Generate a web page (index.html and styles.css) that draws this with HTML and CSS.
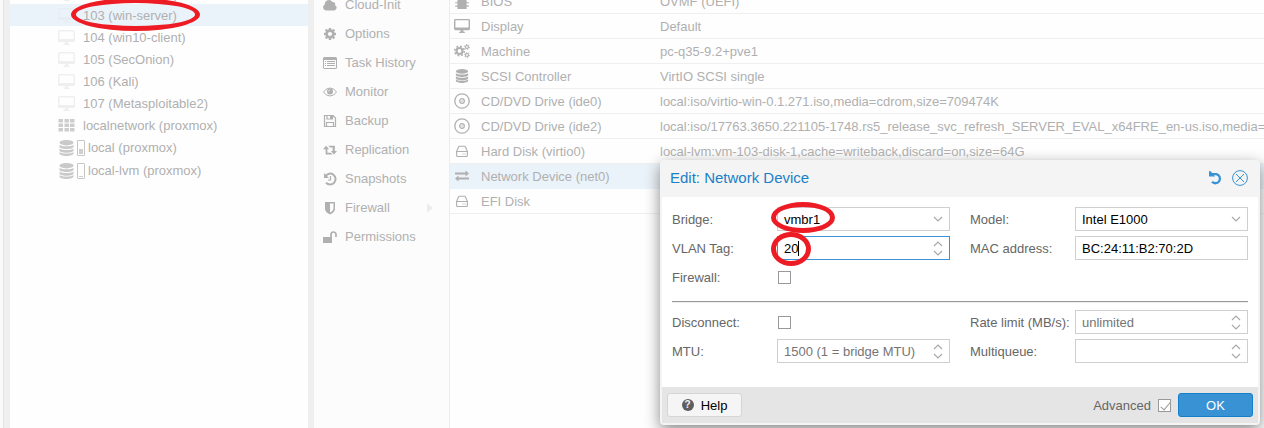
FILE: index.html
```html
<!DOCTYPE html>
<html lang="en">
<head>
<meta charset="utf-8">
<title>Edit: Network Device</title>
<link rel="stylesheet" href="styles.css">
</head>
<body>
<svg class="sprite" aria-hidden="true">
  <symbol id="desktop" viewBox="0 0 17 15"><path fill-rule="evenodd" d="M1.500 0h14Q17 0 17 1.500v9q0 1.500-1.500 1.500h-14Q0 12 0 10.500v-9Q0 0 1.500 0zM1.500 1.500v7.500h14V1.500zM7 12h3v1.500h1.500V15h-6v-1.500H7z"/></symbol>
  <symbol id="grid" viewBox="0 0 16 14"><path d="M0 1h4.500v3.500H0zM6 1h4.500v3.500H6zM11.500 1H16v3.500h-4.500zM0 5.500h4.500V9H0zM6 5.500h4.500V9H6zM11.500 5.500H16V9h-4.500zM0 10h4.500v3.500H0zM6 10h4.500v3.500H6zM11.500 10H16v3.500h-4.500z"/></symbol>
  <symbol id="database" viewBox="0 0 14 16"><ellipse cx="7" cy="2.700" rx="7" ry="2.700"/><path d="M0 4.800c2 2 12 2 14 0v2c0 3-14 3-14 0zM0 8.500c2 2 12 2 14 0v2c0 3-14 3-14 0zM0 12c2 2 12 2 14 0v1.500c0 3.300-14 3.300-14 0z"/></symbol>
  <symbol id="cloud" viewBox="0 0 14 14"><path d="M3 12.500A3.200 3.200 0 0 1 1.800 6.500 4.200 4.200 0 0 1 9.500 4a2.300 2.300 0 0 1 2.500 3.200 2.800 2.800 0 0 1-.6 5.300z"/></symbol>
  <symbol id="cog" viewBox="0 0 14 14"><circle cx="7" cy="7" r="3.400" fill="none" stroke="currentColor" stroke-width="2.600"/><path d="M5.800 1h2.400v2.500H5.800zM5.800 10.500h2.400V13H5.800zM1 5.800h2.500v2.400H1zM10.500 5.800H13v2.400h-2.500zM1.800 3.500l1.700-1.700 2 2-1.700 1.700zM8.500 3.800l2-2 1.700 1.700-2 2zM1.800 10.500l2-2 1.700 1.700-2 2zM8.500 10.200l1.700-1.700 2 2-1.700 1.700z"/></symbol>
  <symbol id="cogs" viewBox="0 0 16 16"><circle cx="5.500" cy="8" r="3" fill="none" stroke="currentColor" stroke-width="2.200"/><circle cx="5.500" cy="8" r="4.800" fill="none" stroke="currentColor" stroke-width="1.600" stroke-dasharray="1.885"/><g fill="none" stroke="currentColor"><circle cx="13" cy="4" r="1.500" stroke-width="1.200"/><circle cx="13" cy="4" r="2.500" stroke-dasharray="1.300"/><circle cx="13" cy="12" r="1.500" stroke-width="1.200"/><circle cx="13" cy="12" r="2.500" stroke-dasharray="1.300"/></g></symbol>
  <symbol id="list" viewBox="0 0 14 12"><path fill-rule="evenodd" d="M1 0h12l1 1v10l-1 1H1l-1-1V1zM1 3v8h12V3z"/><path d="M2 4h1v1H2zM4 4h8v1H4zM2 6h1v1H2zM4 6h8v1H4zM2 8h1v1H2zM4 8h8v1H4z"/></symbol>
  <symbol id="eye" viewBox="0 0 14 10"><path d="M.5 5Q3 1 7 1t6.500 4Q11 9 7 9T.5 5z" fill="none" stroke="currentColor"/><circle cx="7" cy="4.500" r="3"/><path d="M5.500 4.500Q5.500 3 7 3" fill="none" stroke="#fcfcfc" stroke-width=".7"/></symbol>
  <symbol id="save" viewBox="0 0 14 14"><path d="M1.500 1.500h8.500l2.500 2.500v8.500h-11zM4 1.500v3.500h5.500V1.500M3.500 12.500v-4h7v4" fill="none" stroke="currentColor" stroke-width="1.200"/><path d="M7 2h2v3H7z"/></symbol>
  <symbol id="repeat" viewBox="0 0 16 12"><path d="M3.500 1L7 5H5v4h4l2 2H3V5H0zM6 1h7.500v6H16l-3.500 4L9 7h2V3H8z"/></symbol>
  <symbol id="history" viewBox="0 0 14 14"><path d="M2.500 4A5.500 5.500 0 1 1 3 10.800" fill="none" stroke="currentColor" stroke-width="2"/><path d="M1 1v5h5z"/><path d="M7.500 4v4H5" fill="none" stroke="currentColor" stroke-width="1.200"/></symbol>
  <symbol id="shield" viewBox="0 0 12 14"><path fill-rule="evenodd" d="M1 1h10v7q0 3-5 5.500Q1 11 1 8zM6 2.500v9q3.500-1.800 3.500-4v-5z"/></symbol>
  <symbol id="unlock" viewBox="0 0 14 12"><path d="M0 6h9v6H0z"/><path d="M8 6V3.500a2.500 2.500 0 0 1 5 0V6" fill="none" stroke="currentColor" stroke-width="1.700"/></symbol>
  <symbol id="chip" viewBox="0 0 14 14"><path d="M3 0h8v14H3zM1 2h2v1H1zM1 5h2v1H1zM1 8h2v1H1zM1 11h2v1H1zM11 2h2v1h-2zM11 5h2v1h-2zM11 8h2v1h-2zM11 11h2v1h-2z"/></symbol>
  <symbol id="disc" viewBox="0 0 16 16"><g fill="none" stroke="currentColor" stroke-width="1.300"><circle cx="8" cy="8" r="7.200"/><circle cx="8" cy="8" r="2.300"/></g><circle cx="8" cy="8" r=".7"/></symbol>
  <symbol id="hdd" viewBox="0 0 12 12"><path d="M.6 6.500v4q0 1 1 1h8.800q1 0 1-1v-4zL2.500 2q.2-.8 1-.8h5q.8 0 1 .8l1.900 4.500" fill="none" stroke="currentColor" stroke-width="1.100"/><path d="M6.500 8.500h1v1h-1zM8.500 8.500h1v1h-1z"/></symbol>
  <symbol id="exchange" viewBox="0 0 14 12"><path d="M0 2.500h10.500V.5L14 3.500l-3.500 3V4.500H0zM14 7.500H3.500V5.500L0 8.500l3.500 3V9.500H14z"/></symbol>
  <symbol id="down" viewBox="0 0 10 16"><path d="M1 6l4 4 4-4" fill="none" stroke="currentColor" stroke-width="1.200"/></symbol>
  <symbol id="spin" viewBox="0 0 10 16"><path d="M1 6l4-4 4 4M1 11l4 4 4-4" fill="none" stroke="currentColor" stroke-width="1.200"/></symbol>
</svg>

<div class="app">
  <div class="edge"></div>
  <nav class="tree" aria-label="Resources">
    <ul class="tree-list">
      <li class="node"><svg class="screen"><use href="#desktop"/></svg>102 (ubuntu-srv)</li>
      <li class="node selected"><svg class="screen"><use href="#desktop"/></svg>103 (win-server)<span class="mark mark-tree"></span></li>
      <li class="node"><svg class="screen"><use href="#desktop"/></svg>104 (win10-client)</li>
      <li class="node"><svg class="screen"><use href="#desktop"/></svg>105 (SecOnion)</li>
      <li class="node"><svg class="screen"><use href="#desktop"/></svg>106 (Kali)</li>
      <li class="node"><svg class="screen"><use href="#desktop"/></svg>107 (Metasploitable2)</li>
      <li class="node"><svg class="network"><use href="#grid"/></svg>localnetwork (proxmox)</li>
      <li class="node storage"><svg class="db"><use href="#database"/></svg><span class="usage used"></span>local (proxmox)</li>
      <li class="node storage"><svg class="db"><use href="#database"/></svg><span class="usage"></span>local-lvm (proxmox)</li>
    </ul>
  </nav>
  <div class="splitter"></div>
  <nav class="menu" aria-label="Virtual machine">
    <ul class="menu-list">
      <li class="item"><svg><use href="#cloud"/></svg>Cloud-Init</li>
      <li class="item"><svg><use href="#cog"/></svg>Options</li>
      <li class="item"><svg><use href="#list"/></svg>Task History</li>
      <li class="item"><svg><use href="#eye"/></svg>Monitor</li>
      <li class="item"><svg><use href="#save"/></svg>Backup</li>
      <li class="item"><svg><use href="#repeat"/></svg>Replication</li>
      <li class="item"><svg><use href="#history"/></svg>Snapshots</li>
      <li class="item"><svg><use href="#shield"/></svg>Firewall<span class="expand"></span></li>
      <li class="item"><svg><use href="#unlock"/></svg>Permissions</li>
    </ul>
  </nav>
  <main class="hardware">
    <table class="devices">
      <colgroup><col class="name-col"><col></colgroup>
      <tr><td><div class="device"><svg><use href="#chip"/></svg>BIOS</div></td><td>OVMF (UEFI)</td></tr>
      <tr><td><div class="device"><svg><use href="#desktop"/></svg>Display</div></td><td>Default</td></tr>
      <tr><td><div class="device"><svg><use href="#cogs"/></svg>Machine</div></td><td>pc-q35-9.2+pve1</td></tr>
      <tr><td><div class="device"><svg class="stack"><use href="#database"/></svg>SCSI Controller</div></td><td>VirtIO SCSI single</td></tr>
      <tr><td><div class="device"><svg><use href="#disc"/></svg>CD/DVD Drive (ide0)</div></td><td>local:iso/virtio-win-0.1.271.iso,media=cdrom,size=709474K</td></tr>
      <tr><td><div class="device"><svg><use href="#disc"/></svg>CD/DVD Drive (ide2)</div></td><td>local:iso/17763.3650.221105-1748.rs5_release_svc_refresh_SERVER_EVAL_x64FRE_en-us.iso,media=cdrom</td></tr>
      <tr><td><div class="device"><svg class="disk"><use href="#hdd"/></svg>Hard Disk (virtio0)</div></td><td>local-lvm:vm-103-disk-1,cache=writeback,discard=on,size=64G</td></tr>
      <tr class="selected"><td><div class="device"><svg class="stack"><use href="#exchange"/></svg>Network Device (net0)</div></td><td></td></tr>
      <tr><td><div class="device"><svg class="disk"><use href="#hdd"/></svg>EFI Disk</div></td><td></td></tr>
    </table>
  </main>
</div>

<form class="dialog" role="dialog" aria-labelledby="title">
  <header class="head">
    <h1 class="title" id="title">Edit: Network Device</h1>
    <button class="tool" type="button" aria-label="Reset"><svg viewBox="0 0 16 16"><path d="M2.500 4.200H8.500a4.600 4.600 0 1 1-4.500 7.600" fill="none" stroke="currentColor" stroke-width="2.300"/><path d="M1 1l2 .5L7 6.500H1z"/></svg></button>
    <button class="tool" type="button" aria-label="Close"><svg viewBox="0 0 16 16"><g fill="none" stroke="currentColor"><circle cx="8" cy="8" r="7.400"/><path d="M4 4l8 8M12 4l-8 8"/></g></svg></button>
  </header>
  <div class="body">
    <div class="fields">
      <label for="bridge">Bridge:</label>
      <div class="control"><select id="bridge"><option>vmbr1</option></select><svg><use href="#down"/></svg><span class="mark mark-bridge"></span></div>
      <label class="second" for="model">Model:</label>
      <div class="control"><select id="model"><option>Intel E1000</option></select><svg><use href="#down"/></svg></div>
      <label for="vlan">VLAN Tag:</label>
      <div class="control"><input class="active" id="vlan" type="text" value="20"><svg><use href="#spin"/></svg><span class="caret"></span><span class="mark mark-vlan"></span></div>
      <label class="second" for="mac">MAC address:</label>
      <div class="control"><input id="mac" type="text" value="BC:24:11:B2:70:2D"></div>
      <label for="firewall">Firewall:</label>
      <div class="control"><input id="firewall" type="checkbox"></div>
    </div>
    <hr class="rule">
    <div class="fields">
      <label for="disconnect">Disconnect:</label>
      <div class="control"><input id="disconnect" type="checkbox"></div>
      <label class="second" for="rate">Rate limit (MB/s):</label>
      <div class="control"><input id="rate" type="text" placeholder="unlimited"><svg><use href="#spin"/></svg></div>
      <label for="mtu">MTU:</label>
      <div class="control"><input id="mtu" type="text" placeholder="1500 (1 = bridge MTU)"><svg><use href="#spin"/></svg></div>
      <label class="second" for="queues">Multiqueue:</label>
      <div class="control"><input id="queues" type="text"><svg><use href="#spin"/></svg></div>
    </div>
  </div>
  <footer class="foot">
    <button class="button" type="button"><span class="question">?</span>Help</button>
    <label class="advanced" for="advanced">Advanced</label>
    <input id="advanced" type="checkbox" checked>
    <button class="button primary" type="submit">OK</button>
  </footer>
</form>
</body>
</html>
```

FILE: styles.css
```css
* { box-sizing: border-box; }

html, body { height: 100%; }

body {
  margin: 0;
  overflow: hidden;
  font: 13px/17px "Liberation Sans", Arial, sans-serif;
  color: #b0b0b0;
  background: #fefefe;
}

svg { display: block; flex: none; fill: currentColor; }
ul { margin: 0; padding: 0; list-style: none; }
.sprite { position: absolute; width: 0; height: 0; }

/* Masked page behind the dialog */
.app {
  display: grid;
  grid-template-columns: 10px 298px 6px 136px minmax(0, 1fr);
  height: 100%;
  overflow: hidden;
}
.edge { background: #efefef; border-left: 3px solid #fafafa; box-shadow: inset 1px 0 #e3e3e3; }
.splitter { background: #efefef; }

.tree-list { margin-top: -18px; }
.node {
  position: relative;
  display: flex;
  align-items: center;
  gap: 8px;
  height: 22px;
  padding-left: 48px;
  white-space: nowrap;
}
.node.selected { background: #ebf3fa; }
.node.storage { height: 23px; gap: 3px; }
.screen { width: 17px; height: 15px; color: #efefef; }
.selected .screen { color: #e7edf2; }
.network { width: 17px; height: 14px; color: #cdcdcd; }
.db { width: 15px; height: 16px; margin-left: 1px; color: #c9c9c9; }
.usage {
  width: 8px;
  height: 16px;
  border: 1px solid #c6c6c6;
  border-radius: 1px;
  background: linear-gradient(#cfcfcf, #cfcfcf) center bottom 1px / 4px 1px no-repeat;
}
.usage.used { background-size: 4px 5px; }

.menu { background: #fcfcfc; border-right: 1px solid #ececec; }
.menu-list { margin-top: -10px; }
.item { display: flex; align-items: center; gap: 8px; height: 29px; padding: 0 16px 0 9px; }
.item svg { width: 14px; height: 14px; }
.expand {
  margin-left: auto;
  border: 5px solid transparent;
  border-left: 6px solid #ececec;
  border-right: 0;
}

.devices {
  width: 100%;
  margin-top: -11px;
  table-layout: fixed;
  border-collapse: separate;
  border-spacing: 0;
}
.name-col { width: 208px; }
.devices td {
  height: 25px;
  padding: 0;
  border-bottom: 1px solid #efefef;
  overflow: hidden;
  white-space: nowrap;
}
.devices td + td { padding-left: 2px; }
.device { display: flex; align-items: center; gap: 11px; padding-left: 4px; }
.device svg { width: 16px; height: 16px; }
.device .disk { padding: 2px; }
.device .stack { padding: 1px; }
.devices .selected td { background: #ebf3fa; border-color: #ebf3fa; }

/* Dialog */
.dialog {
  position: absolute;
  top: 160px;
  right: 4px;
  width: 600px;
  border: 2px solid #f4f4f4;
  border-radius: 4px;
  background: #fff;
  color: #666;
  box-shadow: 0 5px 15px #888;
}
.head {
  display: flex;
  align-items: center;
  gap: 8px;
  height: 35px;
  padding: 0 10px 4px 8px;
  background: #f4f4f4;
}
.title { flex: 1; margin: 0; font-size: 15px; font-weight: 400; color: #1a80c8; }
.tool { width: 16px; height: 16px; padding: 0; border: 0; background: none; color: #3892d4; }

.body { padding: 10px; }
.fields {
  display: grid;
  grid-template-columns: 105px minmax(0, 1fr) 125px minmax(0, 1fr);
  row-gap: 5px;
  align-items: center;
}
.second { padding-left: 20px; white-space: nowrap; }
.control { position: relative; display: grid; align-items: center; height: 24px; }
.control > select, .control > input, .control > svg { grid-area: 1 / 1; }
.control > svg { width: 10px; height: 16px; margin-right: 7px; justify-self: end; color: #aaa; pointer-events: none; }
select, input[type="text"] {
  appearance: none;
  width: 100%;
  height: 24px;
  margin: 0;
  padding: 0 6px;
  border: 1px solid #cfcfcf;
  border-radius: 0;
  outline: 0;
  background: #fff;
  font: inherit;
  color: #000;
}
input.active { border-color: #3892d4; }
input::placeholder { color: #757575; opacity: 1; }
input[type="checkbox"] {
  appearance: none;
  position: relative;
  width: 13px;
  height: 13px;
  margin: 0;
  border: 1px solid #999;
  background: #fff;
}
.control > input[type="checkbox"] { margin-left: 1px; }
input[type="checkbox"]:checked::after {
  content: "";
  position: absolute;
  left: 4px;
  top: 0;
  width: 4px;
  height: 9px;
  border: solid #999;
  border-width: 0 1px 1px 0;
  transform: rotate(40deg);
}
.caret { position: absolute; left: 21px; top: 5px; width: 1px; height: 15px; background: #000; }
.rule { margin: 12px 0 7px; border: 0; border-top: 1px solid #999; border-bottom: 1px solid #eee; }

.foot {
  display: flex;
  align-items: center;
  gap: 7px;
  height: 36px;
  margin-top: 14px;
  padding: 0 5px;
  background: #e5e5e5;
}
.advanced { margin-left: auto; }
.button {
  display: flex;
  align-items: center;
  justify-content: center;
  gap: 7px;
  width: 75px;
  height: 24px;
  padding: 0;
  border: 1px solid #d5d5d5;
  border-radius: 3px;
  background: #f5f5f5;
  font: inherit;
  color: #000;
}
.question {
  width: 12px;
  height: 12px;
  border-radius: 50%;
  background: #5f5f5f;
  color: #f5f5f5;
  font-size: 10px;
  line-height: 12px;
  font-weight: 700;
  text-align: center;
}
.primary { border-color: #157fcc; background: #3892d4; color: #fff; }

/* Hand-drawn highlights */
.mark { position: absolute; border: 5px solid #ed1c24; border-radius: 50%; pointer-events: none; }
.mark-tree { left: 61px; top: -6px; width: 129px; height: 33px; }
.mark-bridge { left: -6px; top: -5px; width: 64px; height: 31px; }
.mark-vlan { left: -6px; top: -4px; width: 40px; height: 34px; }
```
